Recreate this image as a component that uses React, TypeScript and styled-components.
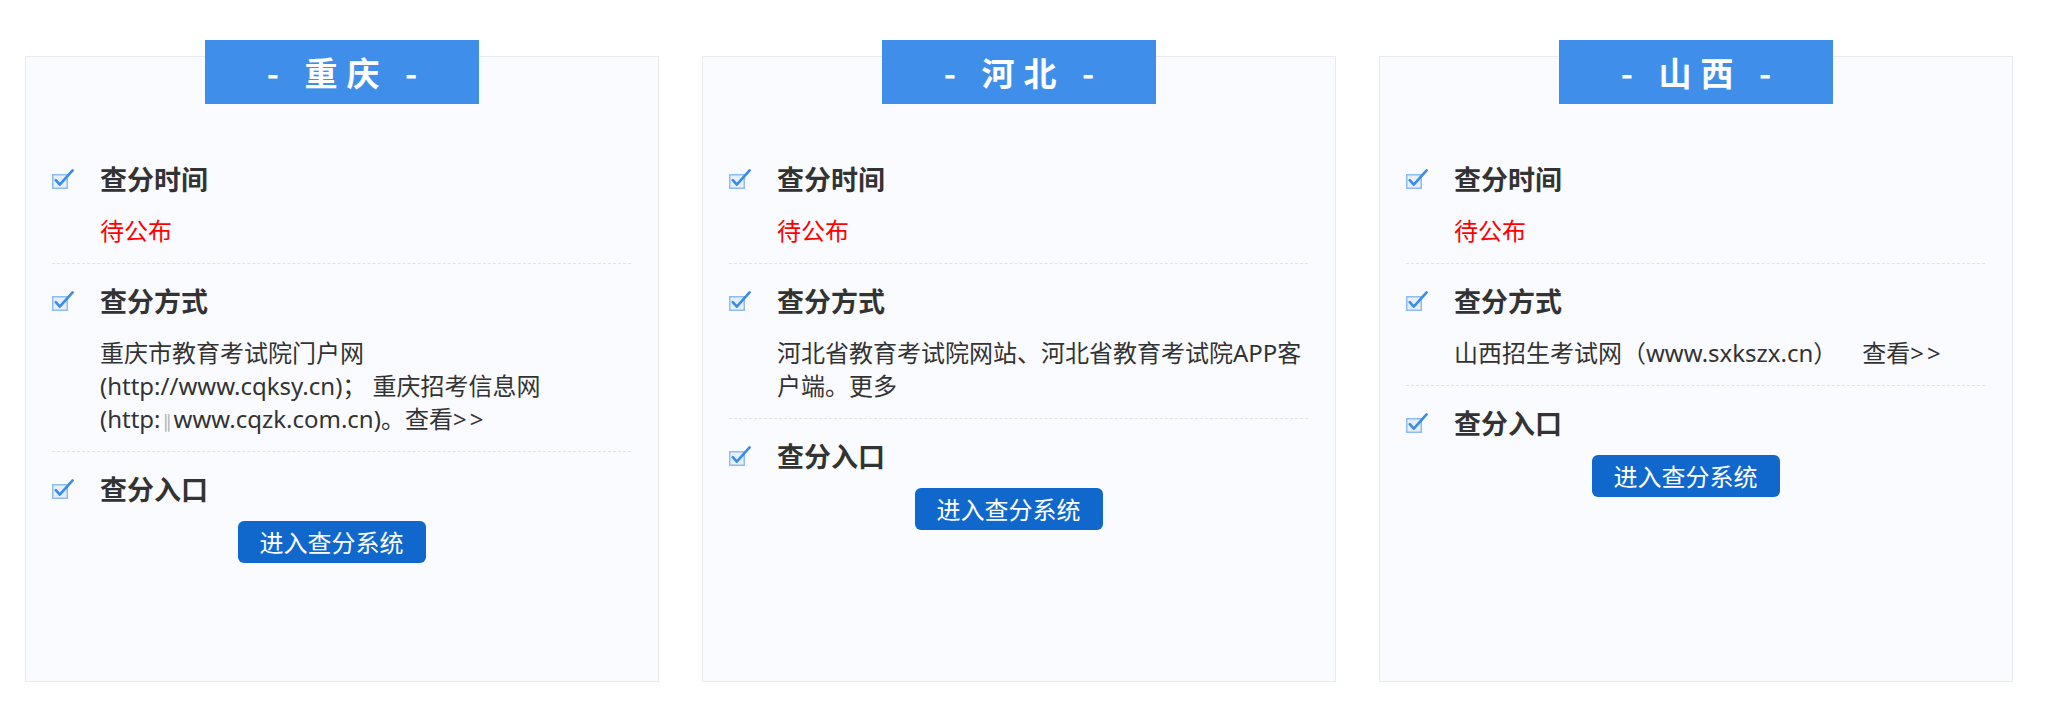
import React from "react";
import styled, { createGlobalStyle } from "styled-components";

const Global = createGlobalStyle`
  html, body { margin: 0; padding: 0; background: #ffffff; }
  body { font-family: "Noto Sans", "Noto Sans CJK SC", sans-serif; color: #333; }
  * { box-sizing: border-box; }
`;

const Row = styled.div`
  display: flex;
  gap: 43px;
  padding: 40px 0 0 25px;
`;

const Card = styled.section`
  position: relative;
  margin-top: 16px;
  width: 634px;
  height: 626px;
  border: 1px solid #e8eaed;
  background: #fafbfe;
  padding: 102px 27px 0 26px;
`;

const Tab = styled.div`
  position: absolute;
  top: -17px;
  left: 50%;
  transform: translateX(-50%);
  width: 274px;
  height: 64px;
  background: #3f8fea;
  color: #ffffff;
  font-family: "Noto Sans CJK SC", sans-serif;
  font-weight: 700;
  font-size: 33px;
  letter-spacing: 9px;
  padding-left: 9px;
  display: flex;
  align-items: center;
  justify-content: center;
  white-space: pre;
`;

const Item = styled.div<{ $first?: boolean; $last?: boolean }>`
  padding: ${(p) => (p.$first ? "0" : "17px")} 0 16px;
  border-bottom: ${(p) => (p.$last ? "none" : "1px dashed #dfe3e9")};
`;

const TitleRow = styled.div`
  display: flex;
  align-items: center;
  height: 40px;
`;

const IconBox = styled.span`
  width: 48px;
  display: flex;
  align-items: center;
`;

const Title = styled.h3`
  margin: 0;
  font-family: "Noto Sans CJK SC", sans-serif;
  font-size: 27px;
  font-weight: 700;
  line-height: 40px;
  color: #333;
`;

const Body = styled.p<{ $red?: boolean }>`
  margin: 15px 0 0;
  padding: 0 3px 0 48px;
  font-size: 24px;
  line-height: 33px;
  color: ${(p) => (p.$red ? "#ff0000" : "#333")};
`;

const Faint = styled.span`
  font-family: "DejaVu Sans", sans-serif;
  font-size: 18px;
  line-height: 0;
  color: #b5b5b5;
  margin: 0 2px;
`;

const Arrows = styled.span`
  letter-spacing: 3px;
`;

const ButtonWrap = styled.div`
  margin-top: 12px;
  padding-right: 20px;
  display: flex;
  justify-content: center;
`;

const EnterButton = styled.button`
  height: 42px;
  padding: 0 22px;
  border: none;
  border-radius: 6px;
  background: #1068cc;
  color: #ffffff;
  font-family: "Noto Sans CJK SC", sans-serif;
  font-size: 24px;
  line-height: 42px;
  cursor: pointer;
`;

const CheckIcon = () => (
  <svg width="22" height="20" viewBox="0 0 22 20">
    <rect x="0.75" y="5.75" width="14.5" height="13.5" fill="#e6f0fc" stroke="#8ebcf2" strokeWidth="1.5" />
    <polyline points="3.8,11.2 7.8,15.6 20.6,1.4" fill="none" stroke="#3a8be8" strokeWidth="2.6" strokeLinecap="round" strokeLinejoin="round" />
  </svg>
);

type Section = { title: string; content?: React.ReactNode; red?: boolean; button?: boolean };

const Block = ({ s, first, last }: { s: Section; first?: boolean; last?: boolean }) => (
  <Item $first={first} $last={last}>
    <TitleRow>
      <IconBox>
        <CheckIcon />
      </IconBox>
      <Title>{s.title}</Title>
    </TitleRow>
    {s.content !== undefined && <Body $red={s.red}>{s.content}</Body>}
    {s.button && (
      <ButtonWrap>
        <EnterButton>进入查分系统</EnterButton>
      </ButtonWrap>
    )}
  </Item>
);

const provinces: { name: string; sections: Section[] }[] = [
  {
    name: "重庆",
    sections: [
      { title: "查分时间", content: "待公布", red: true },
      {
        title: "查分方式",
        content: (
          <>
            重庆市教育考试院门户网(http://www.cqksy.cn)；&nbsp;重庆招考信息网(http:<Faint>∥</Faint>www.cqzk.com.cn)。查看<Arrows>&gt;&gt;</Arrows>
          </>
        ),
      },
      { title: "查分入口", button: true },
    ],
  },
  {
    name: "河北",
    sections: [
      { title: "查分时间", content: "待公布", red: true },
      { title: "查分方式", content: "河北省教育考试院网站、河北省教育考试院APP客户端。更多" },
      { title: "查分入口", button: true },
    ],
  },
  {
    name: "山西",
    sections: [
      { title: "查分时间", content: "待公布", red: true },
      {
        title: "查分方式",
        content: (
          <>
            山西招生考试网（www.sxkszx.cn）&nbsp;&nbsp;&nbsp;&nbsp;查看<Arrows>&gt;&gt;</Arrows>
          </>
        ),
      },
      { title: "查分入口", button: true },
    ],
  },
];

export default function App() {
  return (
    <>
      <Global />
      <Row>
        {provinces.map((p) => (
          <Card key={p.name}>
            <Tab>{`- ${p.name} -`}</Tab>
            {p.sections.map((s, i) => (
              <Block key={s.title} s={s} first={i === 0} last={i === p.sections.length - 1} />
            ))}
          </Card>
        ))}
      </Row>
    </>
  );
}
